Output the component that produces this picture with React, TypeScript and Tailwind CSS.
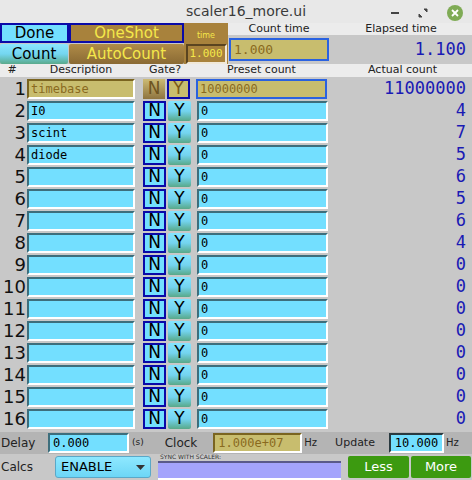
import React from 'react';

const sans = "font-['DejaVu_Sans',sans-serif]";
const mono = "font-['DejaVu_Sans_Mono',monospace]";

const rows = [
  { n: 1, desc: 'timebase', preset: '10000000', actual: '11000000', gate: 'Y' },
  { n: 2, desc: 'I0', preset: '0', actual: '4', gate: 'N' },
  { n: 3, desc: 'scint', preset: '0', actual: '7', gate: 'N' },
  { n: 4, desc: 'diode', preset: '0', actual: '5', gate: 'N' },
  { n: 5, desc: '', preset: '0', actual: '6', gate: 'N' },
  { n: 6, desc: '', preset: '0', actual: '5', gate: 'N' },
  { n: 7, desc: '', preset: '0', actual: '6', gate: 'N' },
  { n: 8, desc: '', preset: '0', actual: '4', gate: 'N' },
  { n: 9, desc: '', preset: '0', actual: '0', gate: 'N' },
  { n: 10, desc: '', preset: '0', actual: '0', gate: 'N' },
  { n: 11, desc: '', preset: '0', actual: '0', gate: 'N' },
  { n: 12, desc: '', preset: '0', actual: '0', gate: 'N' },
  { n: 13, desc: '', preset: '0', actual: '0', gate: 'N' },
  { n: 14, desc: '', preset: '0', actual: '0', gate: 'N' },
  { n: 15, desc: '', preset: '0', actual: '0', gate: 'N' },
  { n: 16, desc: '', preset: '0', actual: '0', gate: 'N' },
];

const Row: React.FC<{ r: (typeof rows)[number] }> = ({ r }) => {
  const base = r.n === 1;
  const field = base
    ? 'bg-[#c8bd6e] text-[#8a6a1e] border-t-[#7a6420] border-l-[#7a6420]'
    : 'bg-[#73dfff] text-black border-t-[#3d6e7c] border-l-[#3d6e7c]';
  return (
    <div className="flex h-[22px] items-center">
      <div className={`w-[26px] text-right text-[18px] leading-none text-[#111] ${sans}`}>{r.n}</div>
      <div
        className={`ml-[1px] flex h-[20px] w-[108px] items-center border-2 border-b-white border-r-white pl-[2px] text-[12px] ${mono} ${field}`}
      >
        {r.desc}
      </div>
      {base ? (
        <>
          <div className={`ml-[8px] flex h-[20px] w-[22px] items-center justify-center bg-gradient-to-b from-[#cdbb74] to-[#8e7440] text-[17px] text-[#6e5420] ${sans}`}>
            N
          </div>
          <div className={`ml-[2px] flex h-[20px] w-[23px] items-center justify-center border-2 border-[#0a0aa8] bg-[#c8bd6e] text-[17px] text-[#7a5a18] ${sans}`}>
            Y
          </div>
        </>
      ) : (
        <>
          <div className={`ml-[8px] flex h-[20px] w-[23px] items-center justify-center border-2 border-[#0a0aa8] bg-[#73dfff] text-[17px] text-black ${sans}`}>
            N
          </div>
          <div className={`ml-[2px] flex h-[20px] w-[23px] items-center justify-center rounded-[2px] bg-gradient-to-b from-[#84e4ff] via-[#74d4f0] to-[#58a888] text-[17px] text-black ${sans}`}>
            Y
          </div>
        </>
      )}
      <div
        className={`ml-[6px] flex h-[20px] w-[131px] items-center border-2 pl-[2px] text-[12px] ${mono} ${
          base ? 'border-[#2a62e0] bg-[#c8bd6e] text-[#8a6a1e]' : 'border-b-white border-r-white border-t-[#3d6e7c] border-l-[#3d6e7c] bg-[#73dfff]'
        }`}
      >
        {r.preset}
      </div>
      <div className={`flex-1 pr-[6px] text-right text-[17px] leading-none text-[#1a1ab4] ${mono}`}>{r.actual}</div>
    </div>
  );
};

export default function App() {
  return (
    <div className={`flex h-[480px] w-[472px] flex-col overflow-hidden bg-[#c8c8c8] ${sans}`}>
      {/* window title bar */}
      <div className="relative flex h-[24px] items-center justify-center bg-[#e8e8e8]">
        <span className="ml-[20px] text-[14px] text-[#3a3a3a]">scaler16_more.ui</span>
        <div className="absolute right-[9px] top-[5px] flex items-center gap-[18px]">
          <div className="h-[2px] w-[8px] bg-[#444]" />
          <svg width="12" height="12" viewBox="0 0 12 12">
            <path d="M7 2h3v3z M5 10H2V7z" fill="#444" stroke="#444" strokeWidth="1" />
          </svg>
          <div className="flex h-[16px] w-[16px] items-center justify-center rounded-full bg-[#7fab55]">
            <svg width="8" height="8" viewBox="0 0 8 8">
              <path d="M1 1l6 6M7 1L1 7" stroke="white" strokeWidth="1.8" />
            </svg>
          </div>
        </div>
      </div>

      {/* top controls */}
      <div className="flex h-[41px]">
        <div className="flex w-[184px] flex-col">
          <div className="flex h-[20px]">
            <div className="flex w-[69px] items-center justify-center border-2 border-[#0a0aa8] bg-[#73dfff] text-[15px] text-black">
              Done
            </div>
            <div className="flex flex-1 items-center justify-center border-2 border-[#0a0aa8] bg-[#a8823c] text-[15px] text-[#f4e84a]">
              OneShot
            </div>
          </div>
          <div className="mt-[1px] flex h-[20px]">
            <div className="flex w-[68px] items-center justify-center rounded-[2px] bg-gradient-to-b from-[#8ae6ff] via-[#74d6f0] to-[#5aaa8c] text-[15px] text-black">
              Count
            </div>
            <div className="ml-[1px] flex flex-1 items-center justify-center rounded-[2px] bg-gradient-to-b from-[#b08c48] to-[#8a6a34] text-[15px] text-[#f4e84a]">
              AutoCount
            </div>
          </div>
        </div>
        <div className="flex w-[44px] flex-col items-center bg-[#a8823c]">
          <div className="mt-[6px] h-[14px] text-[8px] leading-[14px] text-[#f4e84a]">time</div>
          <div className={`mt-[1px] flex h-[20px] w-[41px] items-center justify-center border-2 border-b-[#f0e8d8] border-r-[#f0e8d8] border-l-[#5a4420] border-t-[#5a4420] text-[11px] text-[#f4e84a] ${mono}`}>
            1.000
          </div>
        </div>
        <div className="flex flex-1">
          <div className="flex w-[102px] flex-col">
            <div className="flex h-[12px] items-center justify-center bg-[#ececec] text-[11px] text-[#222]">Count time</div>
            <div className="flex flex-1 items-center pl-[1px]">
              <div className={`flex h-[23px] w-[100px] items-center border-2 border-[#2a62e0] bg-[#c8bd6e] pl-[3px] text-[13px] text-[#8a6a1e] ${mono}`}>
                1.000
              </div>
            </div>
          </div>
          <div className="flex flex-1 flex-col">
            <div className="flex h-[12px] items-center justify-center bg-[#ececec] text-[11px] text-[#222]">Elapsed time</div>
            <div className={`flex flex-1 items-center justify-end pr-[6px] text-[17px] text-[#1a1ab4] ${mono}`}>1.100</div>
          </div>
        </div>
      </div>

      {/* column headings */}
      <div className="flex h-[13px] items-center bg-[#ececec] text-[11px] text-[#222]">
        <div className="w-[26px] pr-[2px] text-center">#</div>
        <div className="w-[110px] text-center">Description</div>
        <div className="w-[58px] text-center">Gate?</div>
        <div className="w-[135px] text-center">Preset count</div>
        <div className="flex-1 pl-[4px] text-center">Actual count</div>
      </div>

      {/* channel rows */}
      <div className="flex flex-col pt-[1px]">
        {rows.map((r) => (
          <Row key={r.n} r={r} />
        ))}
      </div>

      {/* delay / clock / update */}
      <div className="mt-[2px] flex h-[23px] items-center bg-[#b4b4b4] text-[12px] text-[#222]">
        <span className="w-[48px] pl-[1px]">Delay</span>
        <div className={`flex h-[20px] w-[81px] items-center border-2 border-b-white border-r-white border-t-[#3d6e7c] border-l-[#3d6e7c] bg-[#73dfff] pl-[3px] text-[12px] text-black ${mono}`}>
          0.000
        </div>
        <span className="ml-[3px] text-[9px]">(s)</span>
        <span className="ml-[21px]">Clock</span>
        <div className={`ml-[16px] flex h-[20px] w-[89px] items-center border-2 border-b-white border-r-white border-t-[#7a6420] border-l-[#7a6420] bg-[#c8bd6e] pl-[3px] text-[12px] text-[#8a6a1e] ${mono}`}>
          1.000e+07
        </div>
        <span className="ml-[2px] text-[10px]">Hz</span>
        <span className="ml-[18px] text-[11px]">Update</span>
        <div className={`ml-[14px] flex h-[20px] w-[55px] items-center justify-center border-2 border-b-white border-r-white border-t-[#2a3a40] border-l-[#2a3a40] bg-[#73dfff] text-[12px] text-black ${mono}`}>
          10.000
        </div>
        <span className="ml-[2px] text-[10px]">Hz</span>
      </div>

      {/* calcs row */}
      <div className="flex flex-1 items-center text-[12px] text-[#222]">
        <span className="w-[55px] pl-[1px]">Calcs</span>
        <div className="flex h-[22px] w-[96px] items-center justify-between rounded-[3px] border border-[#5aa8c8] bg-gradient-to-b from-[#8ee8ff] to-[#6cd6f6] px-[5px] text-[13px] text-black">
          <span>ENABLE</span>
          <svg width="9" height="5" viewBox="0 0 9 5">
            <path d="M0 0h9L4.5 5z" fill="#333" />
          </svg>
        </div>
        <div className="ml-[7px] flex h-[26px] w-[183px] flex-col">
          <span className="h-[6px] pl-[2px] text-[6px] leading-[6px] text-[#333]">SYNC WITH SCALER:</span>
          <div className="mt-[1px] h-[19px] border-t-2 border-t-[#5a5a8a] border-b-2 border-b-white bg-[#a4a4fc]" />
        </div>
        <div className="ml-[7px] flex gap-[2px]">
          <div className="flex h-[22px] w-[61px] items-center justify-center rounded-[2px] bg-[#3c9a10] text-[13px] text-white">Less</div>
          <div className="flex h-[22px] w-[60px] items-center justify-center rounded-[2px] bg-[#3c9a10] text-[13px] text-white">More</div>
        </div>
      </div>
    </div>
  );
}
